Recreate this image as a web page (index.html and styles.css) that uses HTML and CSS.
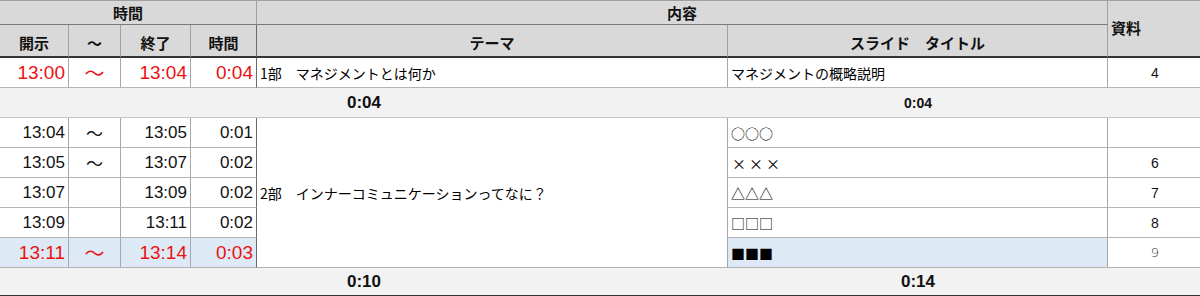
FILE: index.html
```html
<!DOCTYPE html>
<html lang="ja">
<head>
<meta charset="utf-8">
<title>タイムテーブル</title>
<link rel="stylesheet" href="styles.css">
</head>
<body>
<div class="sheet">
  <div class="c h h1 span-time">時間</div>
  <div class="c h h1 span-content">内容</div>
  <div class="c h h-mat">資料</div>

  <div class="c h h2">開示</div>
  <div class="c h h2">～</div>
  <div class="c h h2">終了</div>
  <div class="c h h2 end-time">時間</div>
  <div class="c h h2">テーマ</div>
  <div class="c h h2">スライド　タイトル</div>

  <div class="c num red">13:00</div>
  <div class="c tilde red">～</div>
  <div class="c num red">13:04</div>
  <div class="c num red end-time">0:04</div>
  <div class="c text">1部　マネジメントとは何か</div>
  <div class="c text">マネジメントの概略説明</div>
  <div class="c mat">4</div>

  <div class="c sum sum-left big">0:04</div>
  <div class="c sum small">0:04</div>
  <div class="c sum"></div>

  <div class="c num">13:04</div>
  <div class="c tilde">～</div>
  <div class="c num">13:05</div>
  <div class="c num end-time">0:01</div>
  <div class="c text theme2">2部　インナーコミュニケーションってなに？</div>
  <div class="c text">○○○</div>
  <div class="c mat"></div>

  <div class="c num">13:05</div>
  <div class="c tilde">～</div>
  <div class="c num">13:07</div>
  <div class="c num end-time">0:02</div>
  <div class="c text sym">×××</div>
  <div class="c mat">6</div>

  <div class="c num">13:07</div>
  <div class="c tilde"></div>
  <div class="c num">13:09</div>
  <div class="c num end-time">0:02</div>
  <div class="c text">△△△</div>
  <div class="c mat">7</div>

  <div class="c num">13:09</div>
  <div class="c tilde"></div>
  <div class="c num">13:11</div>
  <div class="c num end-time">0:02</div>
  <div class="c text">□□□</div>
  <div class="c mat">8</div>

  <div class="c num red hl">13:11</div>
  <div class="c tilde red hl">～</div>
  <div class="c num red hl">13:14</div>
  <div class="c num red hl end-time">0:03</div>
  <div class="c text hl">■■■</div>
  <div class="c mat light">9</div>

  <div class="c sum sum-left big last">0:10</div>
  <div class="c sum big last">0:14</div>
  <div class="c sum last"></div>
</div>
</body>
</html>
```

FILE: styles.css
```css
* { box-sizing: border-box; }
html, body { margin: 0; padding: 0; background: #ffffff; }
body { font-family: "Liberation Sans", "Noto Sans CJK JP", sans-serif; color: #111; }

.sheet {
  display: grid;
  grid-template-columns: 69px 52px 70px 66px 471px 380px 92px;
  grid-template-rows: 24px 33px 30px 30px 30px 30px 30px 30px 30px 29px;
  width: 1200px;
  border-top: 1px solid #a0a0a0;
}

.c {
  display: flex;
  align-items: center;
  border-right: 1px solid #a8a8a8;
  border-bottom: 1px solid #b4b4b4;
  overflow: hidden;
  white-space: nowrap;
}

.h {
  background: #d9d9d9;
  font-family: "Noto Sans CJK JP", sans-serif;
  font-weight: 700;
  font-size: 15px;
  justify-content: center;
  border-right-color: #a0a0a0;
}
.h1 { border-bottom: 1px solid #7a7a7a; padding-top: 0; }
.h2 { border-bottom: 2px solid #333333; padding-top: 3px; }
.span-time { grid-column: 1 / 5; grid-row: 1; }
.span-content { grid-column: 5 / 7; grid-row: 1; }
.h-mat {
  grid-column: 7;
  grid-row: 1 / 3;
  justify-content: flex-start;
  padding-left: 3px;
  padding-bottom: 3px;
  border-right: none;
  border-bottom: 2px solid #333333;
}

.num {
  justify-content: flex-end;
  padding-right: 3px;
  font-size: 17px;
}
.num.red { font-size: 19px; }
.tilde {
  justify-content: center;
  font-family: "Noto Sans CJK JP", sans-serif;
  font-size: 17px;
}
.tilde.red { font-size: 20px; }
.red { color: #ee1111; }
.end-time { border-right-color: #6a6a6a; }

.text {
  font-family: "Noto Sans CJK JP", sans-serif;
  font-size: 14px;
  padding-left: 3px;
  color: #000;
}
.sym { letter-spacing: 3px; padding-left: 4px; }
.theme2 { grid-column: 5; grid-row: 5 / 10; }

.mat {
  justify-content: center;
  font-size: 14px;
  border-right: none;
  padding-left: 2px;
}
.mat.light { font-family: "DejaVu Sans", sans-serif; font-size: 13px; color: #333; font-weight: 300; }

.hl { background: #dde9f4; }

.sum {
  background: #f2f2f2;
  justify-content: center;
  font-weight: 700;
  border-right: none;
  border-bottom: 1px solid #c4c4c4;
}
.sum-left { grid-column: 1 / 6; }
.big { font-size: 17px; }
.small { font-size: 14px; }
.last { border-bottom: 2px solid #333333; }
```
